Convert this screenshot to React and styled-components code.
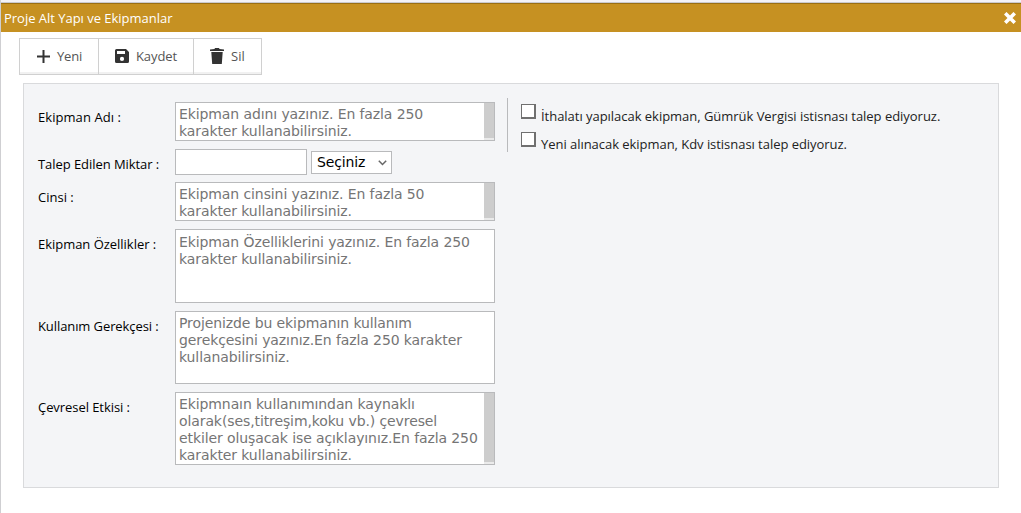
import React from "react";
import styled, { createGlobalStyle } from "styled-components";

const Global = createGlobalStyle`
  * { box-sizing: border-box; }
  body { margin: 0; background: #fff; font-family: "Open Sans", "Noto Sans", sans-serif; font-size: 13px; color: #000; }
`;

const Dialog = styled.div`
  height: 513px;
  border-left: 1px solid #cfcfd2;
  overflow: hidden;
`;
const TopEdge = styled.div`
  height: 3px;
  background: #f3f3f8;
  border-bottom: 1px solid #c9cad0;
`;
const Header = styled.header`
  height: 29px;
  display: flex;
  align-items: center;
  justify-content: space-between;
  padding: 0 5px 0 3px;
  background: #c69122;
  border-top: 1px solid #9a6f14;
  color: #fff;
`;
const Text = styled.span`
  display: block;
  white-space: pre;
  letter-spacing: ${(p) => p.$track || 0}px;
`;
const Toolbar = styled.div`
  display: flex;
  width: 243px;
  height: 37px;
  margin: 6px 0 0 18px;
  border: 1px solid #d0d0d0;
  background: linear-gradient(#fff 0 33px, #f1f1f1 33px);
`;
const Tool = styled.button`
  display: flex;
  align-items: center;
  width: ${(p) => p.$w}px;
  padding: 0 0 1px ${(p) => p.$pad}px;
  gap: ${(p) => p.$gap}px;
  border: 0;
  background: none;
  font: inherit;
  color: #555;
  & + & { border-left: 1px solid #d0d0d0; }
`;
const Panel = styled.main`
  display: flex;
  width: 976px;
  height: 405px;
  margin: 8px 0 0 22px;
  padding: 14px 0 0 14px;
  border: 1px solid #d9dadc;
  background: #f4f5f7;
`;
const Form = styled.div`
  width: 469px;
  padding-top: 4px;
  display: flex;
  flex-direction: column;
  gap: 8px;
`;
const Row = styled.div`
  display: flex;
  align-items: flex-start;
  height: ${(p) => p.$h}px;
`;
const Label = styled.label`
  width: 137px;
  line-height: 18px;
  padding-top: 6px;
`;
const Area = styled.div`
  display: flex;
  justify-content: space-between;
  width: 320px;
  height: 100%;
  border: 1px solid #b9babc;
  background: #fff;
  color: #757575;
  font: 14px/17px "DejaVu Sans", sans-serif;
`;
const Lines = styled.div`
  padding: ${(p) => p.$top ?? 3}px 0 0 3px;
`;
const Scroll = styled.div`
  width: 10px;
  background: #cdcdcd;
  border-bottom: 2px solid #ebebeb;
`;
const Input = styled.input`
  width: 132px;
  height: 26px;
  border: 1px solid #b9babc;
  background: #fff;
  margin: 0 4px 0 0;
`;
const Select = styled.div`
  display: flex;
  align-items: center;
  justify-content: space-between;
  width: 81px;
  height: 23px;
  margin-top: 2px;
  padding: 0 4px 0 5px;
  border: 1px solid #b9babc;
  background: #fff;
  font: 14px/17px "DejaVu Sans", sans-serif;
`;
const Options = styled.div`
  height: 54px;
  border-left: 1px solid #b9babc;
  padding: 6px 0 0 13px;
  color: #222;
`;
const Option = styled.label`
  display: flex;
  height: 28px;
  gap: 5px;
  line-height: 18px;
  & > span { padding-top: 3px; }
`;
const Box = styled.i`
  width: 15px;
  height: 15px;
  border: 1px solid #707070;
  border-right-width: 2px;
  border-bottom-width: 2px;
  background: #fff;
`;

const Plus = () => (
  <svg width="13" height="13" viewBox="0 0 13 13"><path d="M6.500 0v13M0 6.500h13" stroke="#333" strokeWidth="2" /></svg>
);
const Disk = () => (
  <svg width="14" height="14" viewBox="0 0 14 14">
    <path fillRule="evenodd" fill="#333" d="M1.500 0H11l3 3v9.500a1.500 1.500 0 0 1-1.500 1.500h-11A1.500 1.500 0 0 1 0 12.500V1.500A1.500 1.500 0 0 1 1.500 0ZM2 2v3h8V2ZM7 7.800a2.100 2.100 0 1 0 0 4.200a2.100 2.100 0 0 0 0-4.200Z" />
  </svg>
);
const Trash = () => (
  <svg width="14" height="16" viewBox="0 0 14 16">
    <path fill="#333" d="M0 1.500L4.500 1L5 0h4l.5 1L14 1.500V3H0ZM1.300 4h11.400L11.800 16H2.200Z" />
  </svg>
);
const Close = () => (
  <svg width="12" height="12" viewBox="0 0 12 12"><path d="M2.500 2.500l7 7M9.500 2.500l-7 7" stroke="#fff" strokeWidth="3.600" strokeLinecap="square" /></svg>
);
const Chevron = () => (
  <svg width="9" height="6" viewBox="0 0 9 6"><path d="M.8.8l3.700 3.700L8.200.8" fill="none" stroke="#666" strokeWidth="1.500" /></svg>
);

function Field({ label, track, h, top, lines, scroll }) {
  return (
    <Row $h={h}>
      <Label><Text $track={track}>{label}</Text></Label>
      <Area>
        <Lines $top={top}>{lines.map((t) => <Text key={t} $track={-0.1}>{t}</Text>)}</Lines>
        {scroll && <Scroll />}
      </Area>
    </Row>
  );
}

export default function App() {
  return (
    <>
      <Global />
      <Dialog>
        <TopEdge />
        <Header><Text $track={-0.02}>Proje Alt Yapı ve Ekipmanlar</Text><Close /></Header>
        <Toolbar>
          <Tool $w={78} $pad={17} $gap={7}><Plus /><Text $track={-0.2}>Yeni</Text></Tool>
          <Tool $w={95} $pad={16} $gap={7}><Disk /><Text $track={-0.1}>Kaydet</Text></Tool>
          <Tool $w={68} $pad={16} $gap={7}><Trash /><Text>Sil</Text></Tool>
        </Toolbar>
        <Panel>
          <Form>
            <Field label="Ekipman Adı :" track={0.06} h={39} scroll lines={["Ekipman adını yazınız. En fazla 250", "karakter kullanabilirsiniz."]} />
            <Row $h={25}>
              <Label><Text $track={-0.06}>Talep Edilen Miktar :</Text></Label>
              <Input />
              <Select><Text $track={-0.15}>Seçiniz</Text><Chevron /></Select>
            </Row>
            <Field label="Cinsi :" h={39} scroll lines={["Ekipman cinsini yazınız. En fazla 50", "karakter kullanabilirsiniz."]} />
            <Field label="Ekipman Özellikler :" track={-0.03} h={74} top={4} lines={["Ekipman Özelliklerini yazınız. En fazla 250", "karakter kullanabilirsiniz."]} />
            <Field label="Kullanım Gerekçesi :" track={-0.09} h={73} lines={["Projenizde bu ekipmanın kullanım", "gerekçesini yazınız.En fazla 250 karakter", "kullanabilirsiniz."]} />
            <Field label="Çevresel Etkisi :" track={-0.06} h={73} scroll lines={["Ekipmnaın kullanımından kaynaklı", "olarak(ses,titreşim,koku vb.) çevresel", "etkiler oluşacak ise açıklayınız.En fazla 250", "karakter kullanabilirsiniz."]} />
          </Form>
          <Options>
            <Option><Box /><Text $track={-0.03}>İthalatı yapılacak ekipman, Gümrük Vergisi istisnası talep ediyoruz.</Text></Option>
            <Option><Box /><Text $track={-0.04}>Yeni alınacak ekipman, Kdv istisnası talep ediyoruz.</Text></Option>
          </Options>
        </Panel>
      </Dialog>
    </>
  );
}
